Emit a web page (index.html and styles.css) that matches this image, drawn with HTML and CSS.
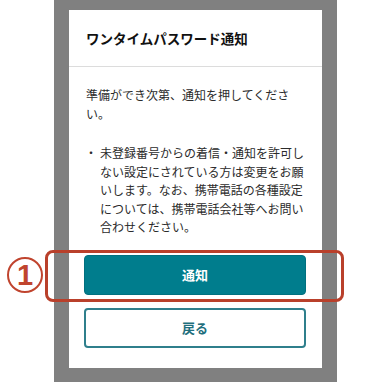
FILE: index.html
```html
<!DOCTYPE html>
<html lang="ja">
<head>
<meta charset="utf-8">
<title>ワンタイムパスワード通知</title>
<link rel="stylesheet" href="styles.css">
</head>
<body>
<div class="stage">
  <div class="frame">
    <div class="card">
      <div class="card-header">
        <h1 class="card-title">ワンタイムパスワード通知</h1>
      </div>
      <div class="card-body">
        <p class="lead">準備ができ次第、通知を押してください。</p>
        <ul class="notes">
          <li>未登録番号からの着信・通知を許可しない設定にされている方は変更をお願いします。なお、携帯電話の各種設定については、携帯電話会社等へお問い合わせください。</li>
        </ul>
        <div class="actions">
          <button class="btn btn-primary" type="button">通知</button>
          <button class="btn btn-secondary" type="button">戻る</button>
        </div>
      </div>
    </div>
  </div>
  <div class="callout-box"></div>
  <div class="callout-num">1</div>
</div>
</body>
</html>
```
FILE: styles.css
```css
html, body {
  margin: 0;
  padding: 0;
  background: #ffffff;
}
body {
  font-family: "Noto Sans CJK JP", "Noto Sans", sans-serif;
  color: #2b2b2b;
}
.stage {
  position: relative;
  width: 390px;
  height: 383px;
  overflow: hidden;
}
.frame {
  width: 283px;
  margin: 0 0 0 54px;
  height: 382px;
  box-sizing: border-box;
  padding: 10px 15px 14px;
  background: #808080;
}
.card {
  background: #ffffff;
  height: 358px;
  display: flex;
  flex-direction: column;
}
.card-header {
  height: 56px;
  border-bottom: 1px solid #dcdcdc;
  display: flex;
  align-items: center;
  padding: 0 17px;
}
.card-title {
  margin: 0;
  font-size: 13.5px;
  font-weight: 700;
  color: #111111;
  line-height: 1;
  padding-top: 1px;
}
.card-body {
  padding: 19px 16px 0 16px;
  font-size: 12px;
  line-height: 18.5px;
}
.lead {
  margin: 0 0 21px 1px;
}
.notes {
  margin: 0 0 18px 0;
  padding: 0 0 0 15px;
  list-style: none;
}
.notes li {
  position: relative;
}
.notes li::before {
  content: "・";
  position: absolute;
  left: -15px;
  top: 0;
}
.actions {
  display: flex;
  flex-direction: column;
  gap: 13px;
  padding-left: 0;
  margin-left: -1px;
}
.btn {
  width: 222px;
  height: 40px;
  border-radius: 4px;
  font-family: "Noto Sans CJK JP", "Noto Sans", sans-serif;
  font-size: 13px;
  font-weight: 700;
  cursor: pointer;
}
.btn-primary {
  background: #007d8d;
  border: 1px solid #00707f;
  color: #ffffff;
}
.btn-secondary {
  background: #ffffff;
  border: 2px solid #2f7f8c;
  color: #1f6f7d;
}
.callout-box {
  position: absolute;
  left: 45px;
  top: 250px;
  width: 299px;
  height: 52px;
  box-sizing: border-box;
  border: 3px solid #b9402b;
  border-radius: 8px;
}
.callout-num {
  position: absolute;
  left: 7px;
  top: 257px;
  width: 36px;
  height: 36px;
  box-sizing: border-box;
  border: 2px solid #c0442e;
  border-radius: 50%;
  color: #c0442e;
  font-family: "Liberation Sans", Arial, sans-serif;
  font-weight: 700;
  font-size: 29px;
  line-height: 32px;
  text-align: center;
}
```
